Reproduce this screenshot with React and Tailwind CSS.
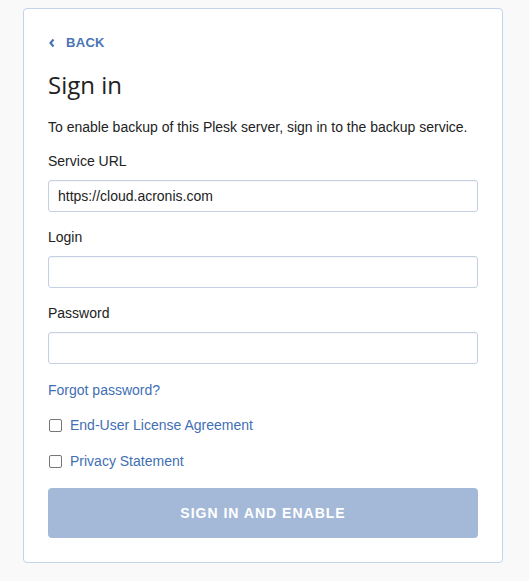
import { useState } from "react";

const Field = ({ label, value, onChange, type = "text", className = "" }) => (
    <div className={className}>
        <div className="h-[20px] leading-[20px] text-[14px] text-[#222]">{label}</div>
        <input
            type={type}
            value={value}
            onChange={(e) => onChange(e.target.value)}
            className="mt-[9px] block w-full h-[32px] px-[9px] border border-[#c4d0e4] rounded-[3px] bg-white text-[14px] text-[#222] outline-none shadow-[inset_0_1px_1px_rgba(0,0,0,0.04)]"
        />
    </div>
);

const Check = ({ label, checked, onChange, className = "" }) => (
    <label className={`flex items-center h-[20px] cursor-pointer ${className}`}>
        <input
            type="checkbox"
            checked={checked}
            onChange={(e) => onChange(e.target.checked)}
            className="appearance-none w-[13px] h-[13px] ml-[1px] border border-[#767676] rounded-[2px] bg-white"
        />
        <span className="ml-[8px] text-[14px] text-[#3f6fb4]">{label}</span>
    </label>
);

export default function App() {
    const [url, setUrl] = useState("https://cloud.acronis.com");
    const [login, setLogin] = useState("");
    const [password, setPassword] = useState("");
    const [eula, setEula] = useState(false);
    const [privacy, setPrivacy] = useState(false);

    return (
        <div className="min-h-screen bg-[#f9f9f9] pt-[8px] font-['Liberation_Sans',Arial,sans-serif]">
            <div className="ml-[23px] w-[480px] bg-white border border-[#c3d3ea] rounded-[4px] px-[24px] pt-[24px] pb-[24px]">
                <a href="#" className="flex items-center h-[20px] text-[#4a75b5] font-bold text-[13px] tracking-[0.3px]">
                    <svg width="8" height="10" viewBox="0 0 8 10">
                        <path d="M5.5 1.5 L2.5 5 L5.5 8.5" fill="none" stroke="#4a75b5" strokeWidth="2.2" />
                    </svg>
                    <span className="ml-[10px]">BACK</span>
                </a>

                <h1 className="mt-[16px] h-[32px] leading-[32px] text-[24px] text-[#222] font-['Open_Sans',sans-serif]">Sign in</h1>

                <p className="mt-[16px] h-[20px] leading-[20px] text-[14px] text-[#222]">
                    To enable backup of this Plesk server, sign in to the backup service.
                </p>

                <Field className="mt-[14px]" label="Service URL" value={url} onChange={setUrl} />
                <Field className="mt-[15px]" label="Login" value={login} onChange={setLogin} />
                <Field className="mt-[15px]" label="Password" type="password" value={password} onChange={setPassword} />

                <a href="#" className="block mt-[16px] h-[20px] leading-[20px] text-[14px] text-[#3f6fb4]">Forgot password?</a>

                <Check className="mt-[15px]" label="End-User License Agreement" checked={eula} onChange={setEula} />
                <Check className="mt-[16px]" label="Privacy Statement" checked={privacy} onChange={setPrivacy} />

                <button className="mt-[17px] w-full h-[50px] rounded-[4px] bg-[#a4b9d8] text-white font-bold text-[14px] tracking-[1px]">
                    SIGN IN AND ENABLE
                </button>
            </div>
        </div>
    );
}
